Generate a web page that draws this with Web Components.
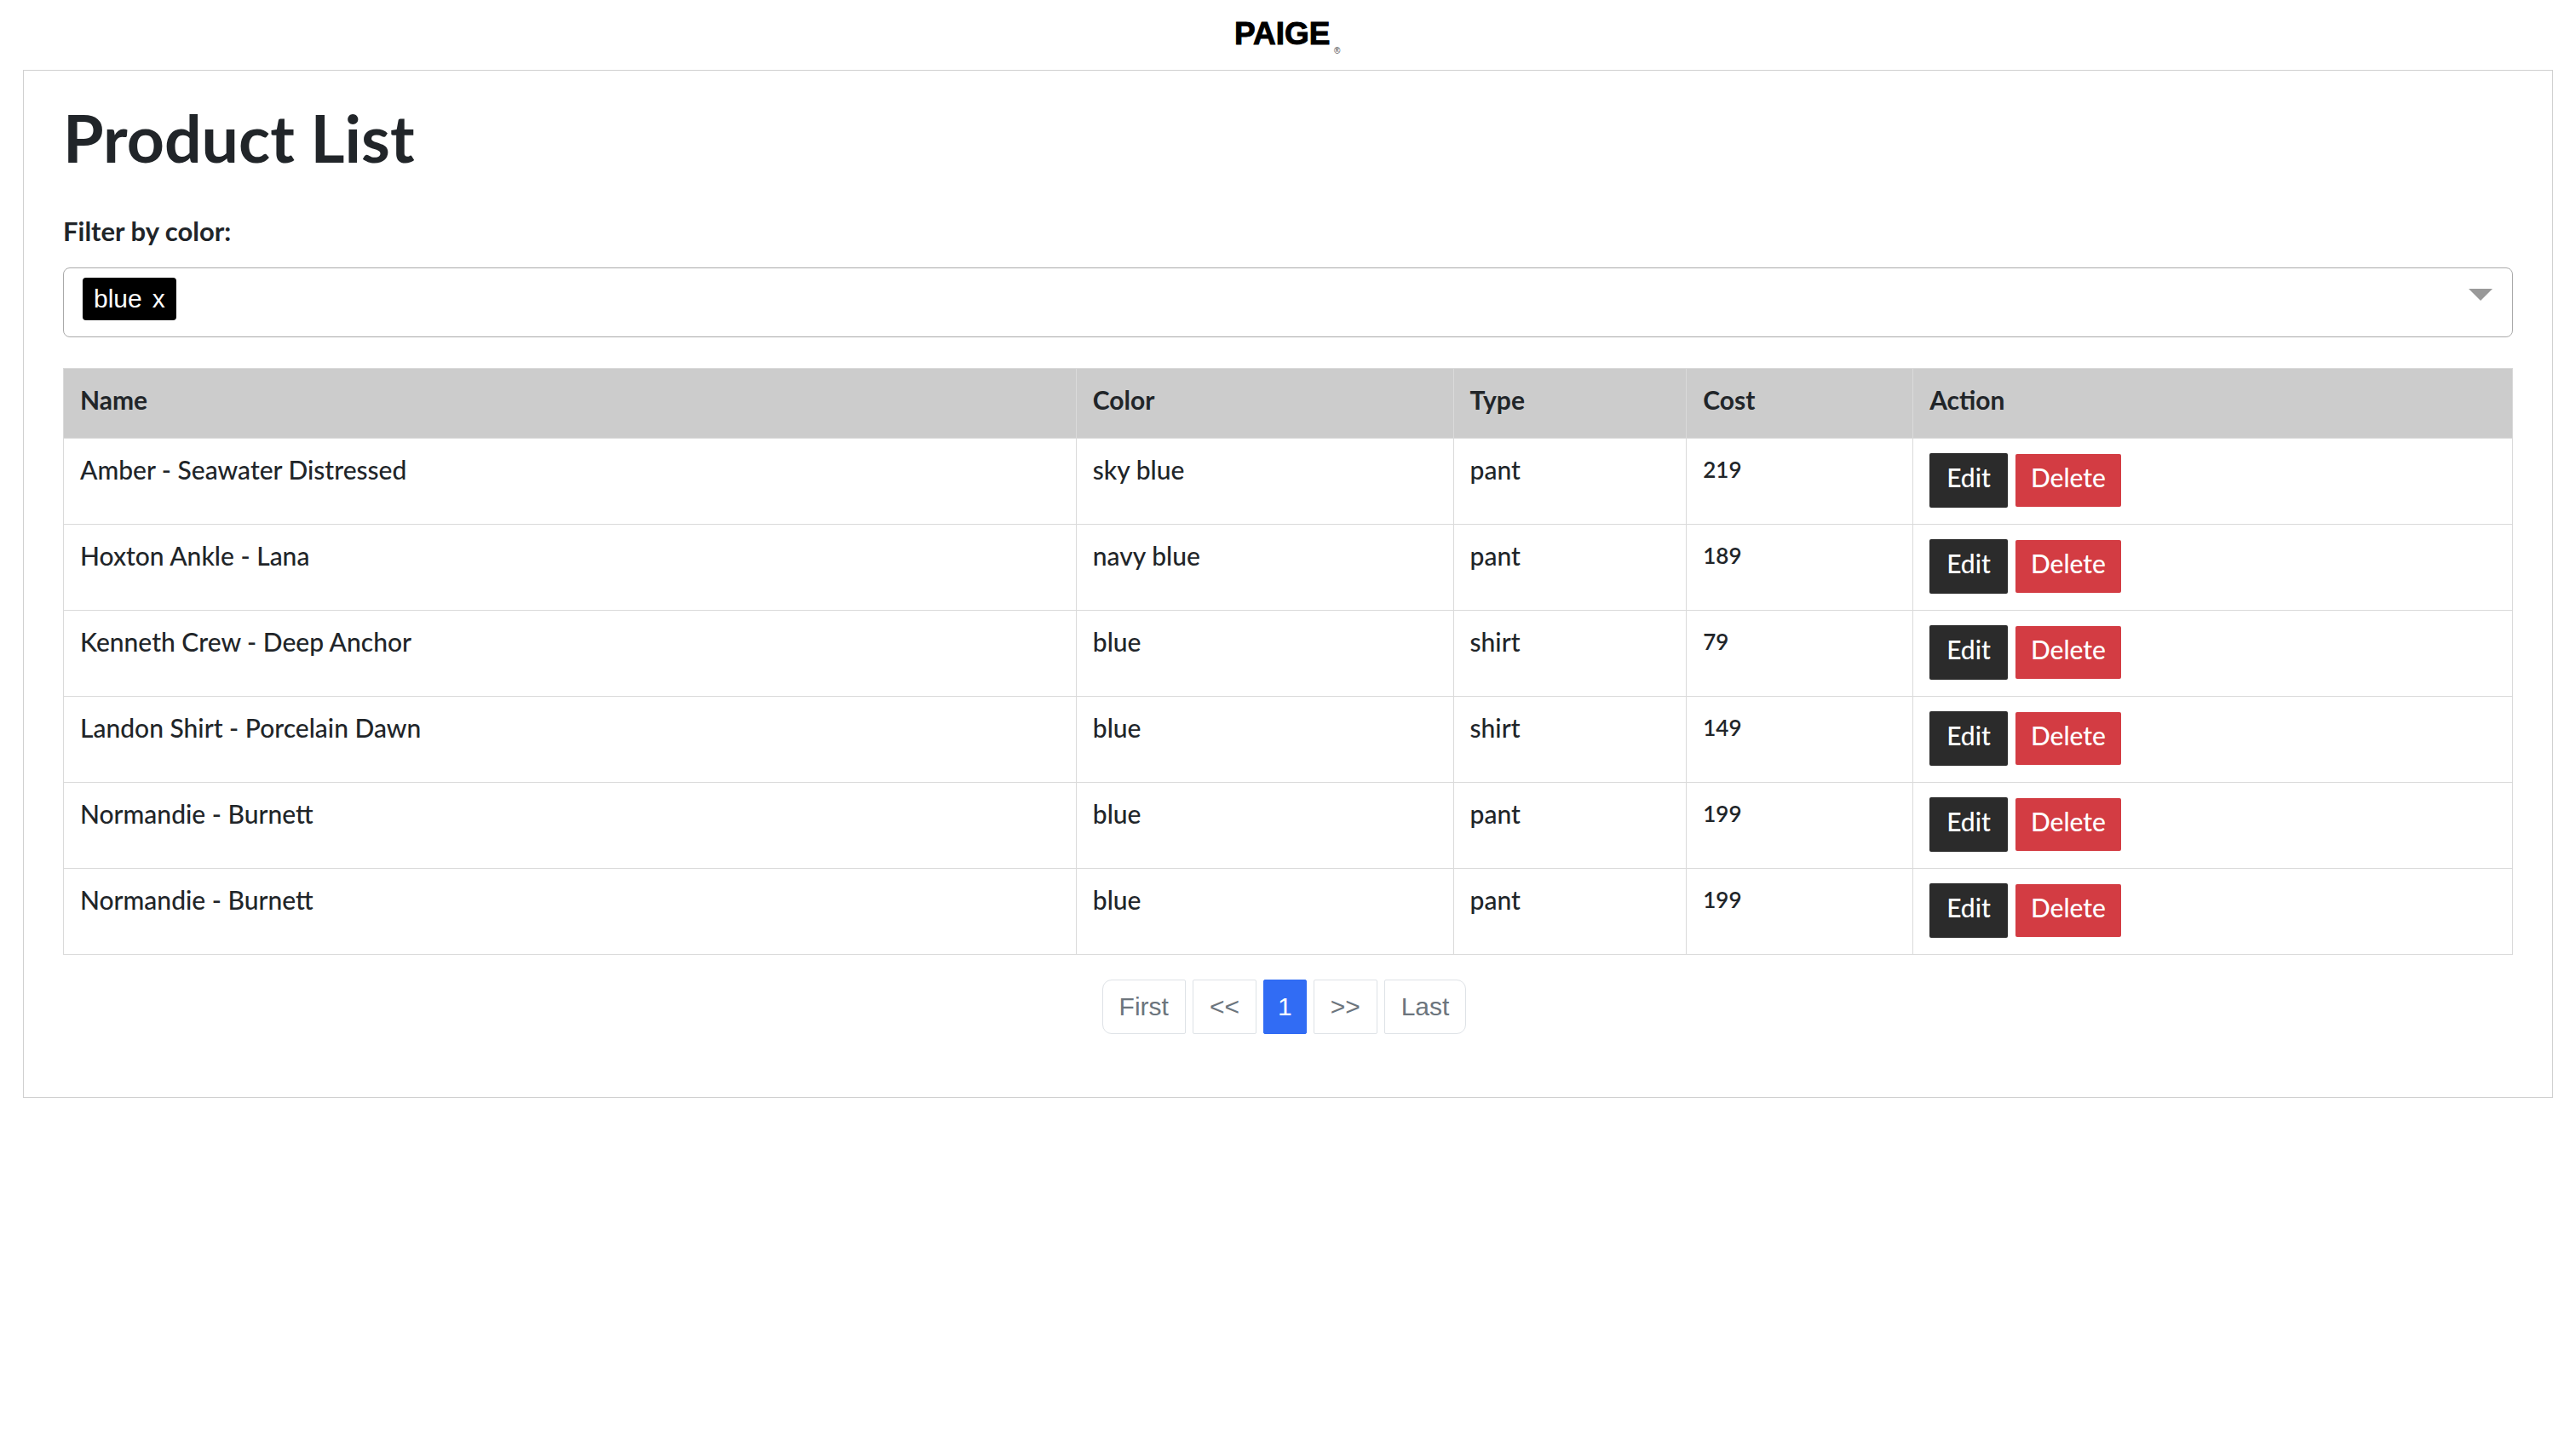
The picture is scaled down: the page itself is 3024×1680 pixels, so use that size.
<!DOCTYPE html>
<html lang="en">
<head>
<meta charset="utf-8">
<title>Product List</title>
<style>
  body {
    margin: 0;
    background: #fff;
    color: #212529;
    font-family: Lato, "Liberation Sans", sans-serif;
    font-size: 30px;
    font-weight: 500;
    line-height: 38px;
  }
</style>
</head>
<body>
<product-app></product-app>
<script>
function define(name, html, setup) {
  const template = document.createElement('template');
  template.innerHTML = html;
  customElements.define(name, class extends HTMLElement {
    connectedCallback() {
      if (this.shadowRoot) return;
      this.attachShadow({ mode: 'open' }).append(template.content.cloneNode(true));
      if (setup) setup(this, this.shadowRoot);
    }
  });
}

define('brand-logo', `
  <style>
    :host { display: flex; justify-content: center; height: 82px; }
    svg { display: block; width: 128px; height: 72px; }
    text { font-family: "Liberation Sans", sans-serif; font-weight: 700; fill: #000; }
    .wordmark { stroke: #000; stroke-width: 1; }
    .mark { font-weight: 400; fill: #444; }
  </style>
  <svg viewBox="0 0 128 72" role="img" aria-label="PAIGE">
    <text class="wordmark" x="1" y="52" font-size="37">PAIGE</text>
    <text class="mark" x="118" y="63" font-size="10">®</text>
  </svg>`);

define('page-panel', `
  <style>
    :host { display: block; margin: 0 27px; padding: 34px 46px 74px; border: 1px solid #d0d0d0; }
  </style>
  <slot></slot>`);

define('page-title', `
  <style>
    :host { display: block; }
    h1 { margin: 0; font-size: 77px; font-weight: 700; line-height: 88px; }
  </style>
  <h1><slot></slot></h1>`);

define('filter-chip', `
  <style>
    :host { display: flex; align-items: center; gap: 12px; height: 50px; padding: 0 13px;
            border-radius: 4px; background: #000; color: #fff;
            font-family: "Liberation Sans", sans-serif; font-size: 30px; font-weight: 400; }
    button { margin: 0; padding: 0; border: 0; background: none; color: inherit; font: inherit; cursor: pointer; }
  </style>
  <span><slot></slot></span><button type="button">x</button>`);

define('color-filter', `
  <style>
    :host { display: block; margin-top: 47px; }
    label { display: block; font-size: 31px; font-weight: 700; line-height: 38px; }
    .box { display: flex; align-items: flex-start; box-sizing: border-box; height: 82px; margin-top: 24px;
           padding: 11px 23px 0 22px; border: 1px solid #aaa; border-radius: 8px; }
    input { flex: 1; min-width: 0; height: 50px; margin: 0; padding: 0 12px; border: 0; outline: 0;
            background: none; font: inherit; color: inherit; }
    .toggle { width: 28px; height: 40px; margin: 0; padding: 0; border: 0; background: none; }
    .toggle svg { display: block; width: 28px; height: 14px; }
  </style>
  <label for="color">Filter by color:</label>
  <div class="box">
    <slot></slot>
    <input id="color" type="text" role="combobox" aria-expanded="false">
    <button class="toggle" type="button" aria-label="Show colors">
      <svg viewBox="0 0 28 14"><path d="M0 0H28L14 14Z" fill="#999"/></svg>
    </button>
  </div>`);

define('action-button', `
  <style>
    :host { display: block; }
    button { display: block; margin: 0; padding: 9px 20px 17px; border: 0; border-radius: 2px;
             background: #2b2b2b; color: #fff; font: inherit; cursor: pointer; }
    :host([variant="danger"]) button { padding: 8px 18px 16px; background: #d33c43; }
  </style>
  <button type="button"><slot></slot></button>`);

const products = [
  ['Amber - Seawater Distressed', 'sky blue', 'pant', 219],
  ['Hoxton Ankle - Lana', 'navy blue', 'pant', 189],
  ['Kenneth Crew - Deep Anchor', 'blue', 'shirt', 79],
  ['Landon Shirt - Porcelain Dawn', 'blue', 'shirt', 149],
  ['Normandie - Burnett', 'blue', 'pant', 199],
  ['Normandie - Burnett', 'blue', 'pant', 199]
];

define('product-table', `
  <style>
    :host { display: block; margin-top: 36px; }
    table { width: 100%; table-layout: fixed; border-collapse: collapse; }
    th, td { box-sizing: border-box; padding: 17px 19px; border: 1px solid #dadada; text-align: left; vertical-align: top; }
    th { height: 82px; background: #ccc; font-weight: 700; }
    td { height: 101px; font-weight: 500; }
    .name { width: 41.35%; }
    .color { width: 15.4%; }
    .type { width: 9.52%; }
    .cost { width: 9.25%; }
    td.number { font-size: 26px; font-weight: 600; }
    .actions { display: flex; align-items: center; gap: 9px; }
  </style>
  <table>
    <thead>
      <tr><th class="name">Name</th><th class="color">Color</th><th class="type">Type</th><th class="cost">Cost</th><th>Action</th></tr>
    </thead>
    <tbody></tbody>
  </table>`, (host, root) => {
  root.querySelector('tbody').innerHTML = products.map(([name, color, type, cost]) => `
    <tr><td>${name}</td><td>${color}</td><td>${type}</td><td class="number">${cost}</td>
    <td><div class="actions"><action-button>Edit</action-button><action-button variant="danger">Delete</action-button></div></td></tr>`).join('');
});

define('page-link', `
  <style>
    :host { display: block; }
    button { display: block; box-sizing: border-box; height: 64px; margin: 0; padding: 0 19px;
             border: 1px solid #dee2e6; border-radius: 2px; background: #fff; color: #6c757d;
             font-family: "Liberation Sans", sans-serif; font-size: 30px; font-weight: 400; line-height: 62px; }
    :host([edge="start"]) button { border-radius: 11px 2px 2px 11px; }
    :host([edge="end"]) button { border-radius: 2px 11px 11px 2px; }
    :host([active]) button { padding: 0 16px; border-color: #316cf4; background: #316cf4; color: #fff; }
  </style>
  <button type="button"><slot></slot></button>`);

define('page-pagination', `
  <style>
    :host { display: block; margin-top: 29px; }
    nav { display: flex; justify-content: center; gap: 8px; padding-right: 9px; }
  </style>
  <nav aria-label="Pages"><slot></slot></nav>`);

define('product-app', `
  <style>
    :host { display: block; }
  </style>
  <brand-logo></brand-logo>
  <page-panel>
    <page-title>Product List</page-title>
    <color-filter><filter-chip>blue</filter-chip></color-filter>
    <product-table></product-table>
    <page-pagination>
      <page-link edge="start">First</page-link>
      <page-link>&lt;&lt;</page-link>
      <page-link active>1</page-link>
      <page-link>&gt;&gt;</page-link>
      <page-link edge="end">Last</page-link>
    </page-pagination>
  </page-panel>`);
</script>
</body>
</html>
